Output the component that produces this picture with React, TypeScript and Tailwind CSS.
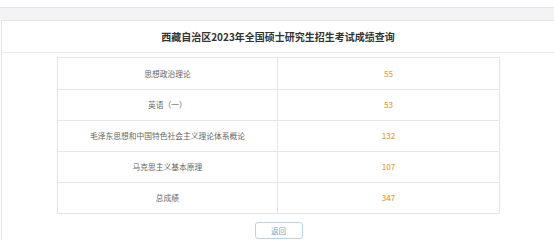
import React from 'react';

const scores = [
  { subject: '思想政治理论', score: 55 },
  { subject: '英语（一）', score: 53 },
  { subject: '毛泽东思想和中国特色社会主义理论体系概论', score: 132 },
  { subject: '马克思主义基本原理', score: 107 },
  { subject: '总成绩', score: 347 },
];

const App: React.FC = () => {
  return (
    <div className="w-[554px] h-[240px] overflow-hidden bg-white font-['Noto_Sans_CJK_SC','Noto_Sans',sans-serif]">
      {/* top strip + gray band */}
      <div className="h-[8px] bg-white border-b border-[#e4e4e6]" />
      <div className="h-[12px] bg-[#f3f3f5]" />

      {/* result panel */}
      <div className="ml-[1px] bg-white border-t border-l border-[#e4e4e6] h-[220px]">
        <div className="h-[32px] flex items-center justify-center border-b border-[#e8e8ea]">
          <h1 className="text-[10px] font-bold text-[#333]">
            西藏自治区2023年全国硕士研究生招生考试成绩查询
          </h1>
        </div>

        <div className="ml-[55px] mt-[4px] w-[443px] border border-[#e6e6e6]">
          {scores.map((row, i) => (
            <div
              key={row.subject}
              className={`grid grid-cols-[220px_1fr] h-[31px] ${i > 0 ? 'border-t border-[#e6e6e6]' : ''}`}
            >
              <div className="flex items-center justify-center text-[7.75px] text-[#666] border-r border-[#e6e6e6]">
                {row.subject}
              </div>
              <div className="flex items-center justify-center text-[8px] font-medium text-[#e9a04a]">
                {row.score}
              </div>
            </div>
          ))}
        </div>

        <div className="flex justify-center mt-[8px] pl-[1px]">
          <button className="w-[48px] h-[17px] rounded-[3px] border border-[#b9d3e3] bg-white text-[7.5px] text-[#7ba2c4] flex items-center justify-center">
            返回
          </button>
        </div>
      </div>
    </div>
  );
};

export default App;
